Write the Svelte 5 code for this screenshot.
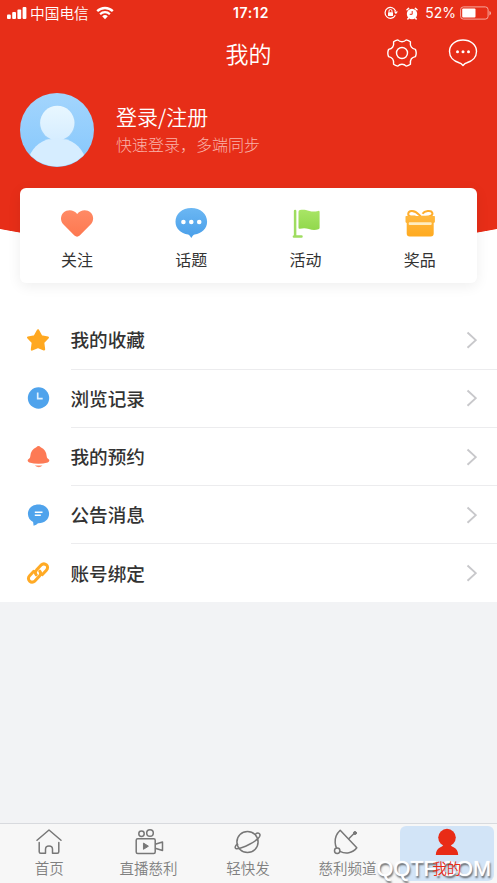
<script lang="ts">
    const shortcuts = [
        { icon: 'heart', label: '关注' },
        { icon: 'topic', label: '话题' },
        { icon: 'flag', label: '活动' },
        { icon: 'gift', label: '奖品' }
    ];

    const menu = [
        { icon: 'star', label: '我的收藏' },
        { icon: 'clock', label: '浏览记录' },
        { icon: 'bell', label: '我的预约' },
        { icon: 'notice', label: '公告消息' },
        { icon: 'link', label: '账号绑定' }
    ];

    const tabs = [
        { icon: 'home', label: '首页' },
        { icon: 'live', label: '直播慈利' },
        { icon: 'planet', label: '轻快发' },
        { icon: 'dish', label: '慈利频道' },
        { icon: 'user', label: '我的' }
    ];

    let active = $state('user');
</script>

<div class="page">
    <header class="hero">
        <div class="status">
            <div class="status-left">
                <svg width="20" height="14" viewBox="0 0 20 14" fill="#fff">
                    <rect x="0" y="8.5" width="3.8" height="4.5" rx="1" />
                    <rect x="5.2" y="6" width="3.8" height="7" rx="1" />
                    <rect x="10.4" y="3.5" width="3.8" height="9.5" rx="1" />
                    <rect x="15.6" y="1" width="3.8" height="12" rx="1" />
                </svg>
                <span class="carrier">中国电信</span>
                <svg width="18" height="14" viewBox="0 0 18 14" fill="none" stroke="#fff">
                    <path d="M1.2 5.2a11.2 11.2 0 0 1 15.6 0" stroke-width="2.4" />
                    <path d="M4.1 8.2a7 7 0 0 1 9.8 0" stroke-width="2.2" />
                    <path d="M6.2 10.3a4 4 0 0 1 5.6 0L9 13.2z" fill="#fff" stroke="none" />
                </svg>
            </div>
            <span class="time">17:12</span>
            <div class="status-right">
                <svg width="14" height="14" viewBox="0 0 14 14" fill="none" stroke="#fff">
                    <path d="M11.6 5.2A5.4 5.4 0 1 0 11.3 9.3" stroke-width="1.2" />
                    <path d="M9.9 5.6h4l-2 2.6z" fill="#fff" stroke="none" />
                    <path d="M5 6.5V5a1.5 1.5 0 0 1 3 0v1.5" />
                    <rect x="4" y="6.2" width="5" height="3.8" rx=".5" fill="#fff" stroke="none" />
                </svg>
                <svg class="alarm" width="12" height="13" viewBox="0 0 12 13">
                    <circle cx="6" cy="7" r="5.2" fill="#fff" />
                    <path d="M1 2.8 2.6 1.4M9.4 1.4 11 2.8M2.4 11.2l-.6.8M9.6 11.2l.6.8" stroke="#fff" stroke-width="1.5" stroke-linecap="round" />
                    <path d="M6.2 4v3.3H3.7" fill="none" stroke="#e72e18" />
                </svg>
                <span class="percent">52%</span>
                <svg width="32" height="14" viewBox="0 0 32 14">
                    <rect x=".6" y=".9" width="27.5" height="12.2" rx="2.8" fill="none" stroke="#f5a99f" stroke-width="1" />
                    <rect x="2.2" y="2.5" width="13.3" height="9" rx="1" fill="#fff" />
                    <path d="M29.4 5v4.4q1.6-.6 1.6-2.2T29.4 5z" fill="#f5a99f" />
                </svg>
            </div>
        </div>

        <div class="titlebar">
            <h1>我的</h1>
            <div class="actions">
                <svg width="30" height="28" viewBox="0 0 30 28" fill="none" stroke="#fff" stroke-width="1.4" stroke-linejoin="round">
                    <path d="M10.8.9C12 2.300 13.400 2.800 15 2.800s3-.5 4.200-1.900q2.400.5 4.200 1.800c-.4 2.800.1 4.300 1 5.500 1 1.300 2.300 1.800 4 2.200q.8 1.800.8 3.600t-.8 3.600c-1.700.4-3 .9-4 2.200-.9 1.200-1.400 2.700-1 5.500q-1.800 1.300-4.200 1.800C18 25.700 16.600 25.200 15 25.200s-3 .5-4.200 1.900q-2.400-.5-4.200-1.800c.4-2.800-.1-4.300-1-5.500-1-1.300-2.300-1.800-4-2.200Q.8 15.800.8 14t.8-3.600c1.700-.4 3-.9 4-2.200.9-1.200 1.400-2.700 1-5.500Q8.400 1.400 10.800.9z" />
                    <circle cx="15" cy="14" r="5.5" />
                </svg>
                <svg width="30" height="28" viewBox="0 0 30 28" fill="none" stroke="#fff" stroke-width="1.4" stroke-linejoin="round">
                    <path d="M15 1C7.300 1 1.500 6 1.500 12.500c0 5.500 4 9.700 9.600 11.200 1.700.4 2.600 1.200 3.900 2.800 1.300-1.600 2.200-2.400 3.900-2.800 5.600-1.500 9.600-5.700 9.600-11.200C28.500 6 22.700 1 15 1z" />
                    <g fill="#fff" stroke="none">
                        <circle cx="9.5" cy="12.7" r="1.5" />
                        <circle cx="15" cy="12.7" r="1.5" />
                        <circle cx="20.5" cy="12.7" r="1.5" />
                    </g>
                </svg>
            </div>
        </div>

        <div class="profile">
            <svg width="74" height="74" viewBox="0 0 74 74">
                <defs>
                    <linearGradient id="av-bg" x1="0" y1="0" x2="0" y2="1">
                        <stop offset="0" stop-color="#a3d5fd" />
                        <stop offset="1" stop-color="#85c7fc" />
                    </linearGradient>
                    <linearGradient id="av-head" x1="0" y1="0" x2="0" y2="1">
                        <stop offset="0" stop-color="#e8f7ff" />
                        <stop offset="1" stop-color="#d6edff" />
                    </linearGradient>
                    <clipPath id="av-clip"><circle cx="37" cy="37" r="36.6" /></clipPath>
                </defs>
                <circle cx="37" cy="37" r="37" fill="url(#av-bg)" />
                <g clip-path="url(#av-clip)">
                    <path d="M9 64c4-10 13-19 28-19s24 9 28 19v12H9z" fill="#d6edff" />
                    <circle cx="37.3" cy="30.5" r="18" fill="#a2d2f8" opacity=".5" />
                    <circle cx="37.3" cy="30" r="17.2" fill="url(#av-head)" />
                    <path d="M25 48q12-5 24 0v6H25z" fill="#d6edff" />
                </g>
            </svg>
            <div class="profile-text">
                <strong>登录/注册</strong>
                <span>快速登录，多端同步</span>
            </div>
        </div>
    </header>

    <section class="shortcuts">
        {#each shortcuts as item}
            <div class="shortcut">
                <svg width="34" height="34" viewBox="0 0 34 34">
                    {#if item.icon === 'heart'}
                        <linearGradient id="g-heart" x1="0" y1="0" x2="0" y2="1">
                            <stop offset="0" stop-color="#ff8a65" /><stop offset="1" stop-color="#fd7850" />
                        </linearGradient>
                        <path d="M17.200 8C13.500 3.300 7.300 3.200 3.600 6.600.100 9.900.200 15.300 3.500 18.600l10.900 11q2.700 2.200 5.300 0l10.900-11c3.400-3.300 3.400-8.700 0-12C26.900 3.200 20.800 3.500 17.200 8z" fill="url(#g-heart)" />
                    {:else if item.icon === 'topic'}
                        <linearGradient id="g-topic" x1="0" y1="0" x2="0" y2="1">
                            <stop offset="0" stop-color="#6bb7f3" /><stop offset="1" stop-color="#4a9fe9" />
                        </linearGradient>
                        <path d="M17.300 2C8 2 1.500 7.800 1.500 15.800c0 6.700 5.300 11.700 12.600 12.800 1.400.4 2 1.600 3.200 3.400 1.200-1.800 1.800-3 3.200-3.400 7.300-1.100 12.600-6.100 12.600-12.800C33.100 7.800 26.600 2 17.300 2z" fill="url(#g-topic)" />
                        <g fill="#fff">
                            <circle cx="9.4" cy="16" r="2.3" />
                            <circle cx="17.3" cy="16" r="2.3" />
                            <circle cx="25.2" cy="16" r="2.3" />
                        </g>
                    {:else if item.icon === 'flag'}
                        <linearGradient id="g-flag" x1="0" y1="0" x2="0" y2="1">
                            <stop offset="0" stop-color="#a9e566" /><stop offset="1" stop-color="#91d84c" />
                        </linearGradient>
                        <path d="M6.1 5v25.6M4.900 30.500h7.600" stroke="#9fdd60" stroke-width="2.5" stroke-linecap="round" fill="none" />
                        <path d="M9.500 5.800q0-1.400 1.500-1.700c3-.6 5-.5 9.500.9 3 .9 5.500.6 8.800-.1q1.300-.2 1.300 1.100v15.700q0 1.100-1.200 1.500c-3 1.100-6 1-9.500-.2-3.400-1.100-5.800-1-9-.3q-1.400.3-1.400-1z" fill="url(#g-flag)" />
                    {:else}
                        <linearGradient id="g-gift" x1="0" y1="0" x2="0" y2="1">
                            <stop offset="0" stop-color="#ffb83e" /><stop offset="1" stop-color="#ffaa20" />
                        </linearGradient>
                        <path d="M12.500 10.500H7.800C4 9.700 4.500 5.200 8.600 4.900c5-.3 6.600 3.200 9.400 5.800h4.600c4.800-.2 7.500-1.600 6.700-3.900-1.100-2.900-7.800-2.200-9.800 1" fill="none" stroke="#ffae2d" stroke-width="2" />
                        <path d="M3.100 10h28.200q.6 0 .6.700v5.100q0 1-1.200 1.200V27.500q0 3-3 3H6.700q-3 0-3-3V17q-1.200-.2-1.200-1.200v-5.100q0-.7.6-.7z" fill="url(#g-gift)" />
                        <rect x="5.7" y="16.2" width="23" height="2.7" rx="1" fill="#ffedc0" />
                    {/if}
                </svg>
                <span>{item.label}</span>
            </div>
        {/each}
    </section>

    <section class="menu">
        {#each menu as item}
            <div class="menu-row">
                <svg class="menu-icon" width="24" height="24" viewBox="0 0 24 24">
                    {#if item.icon === 'star'}
                        <path d="m12 2.300 3.300 6 6.600 1.200-4.700 5 .9 7L12 18.900l-6.100 2.600.9-7-4.700-5 6.600-1.200z" fill="#ffa820" stroke="#ffa820" stroke-width="2.2" stroke-linejoin="round" />
                    {:else if item.icon === 'clock'}
                        <circle cx="12.5" cy="12" r="10.7" fill="#4fa3ec" />
                        <path d="M11.700 6.500v6.200h5" fill="none" stroke="#dff1ff" stroke-width="1.7" />
                    {:else if item.icon === 'bell'}
                        <path d="M10.300 2.300q2.200-2.800 4.400 0c3.700 1.400 5.700 4.600 6 9 .2 1.500.6 2.100 1.900 3 1.200.8.900 2.600-.8 3.100-6.200 1.900-12.400 1.900-18.600 0-1.700-.5-2-2.300-.8-3.100 1.300-.9 1.700-1.500 1.900-3 .3-4.400 2.300-7.600 6-9z" fill="#fd7a55" />
                        <path d="M8.700 20.600h7.800q-3.500 3.400-7.800 0z" fill="#fd8b6b" />
                    {:else if item.icon === 'notice'}
                        <path d="M12.500 1.500c-6.200 0-10.600 4-10.600 9.300 0 3.700 2 6.600 5.200 8.100l.5 3.900q3-.6 4.400-2.500c6.400.2 11.100-3.900 11.100-9.500 0-5.300-4.400-9.300-10.600-9.300z" fill="#4fa3ec" />
                        <path d="M8.800 9.200h7.700M8.800 12.200h6" stroke="#fff" stroke-width="1.4" />
                    {:else}
                        <g fill="none" stroke="#ffaa25" stroke-width="3" stroke-linecap="round">
                            <path d="M10.200 13.800q-1.900-2.400.3-4.700l4.400-4.900c3.900-3.500 9 1.200 5.500 5l-4.200 4.500" />
                            <path d="M13.800 10.200q1.900 2.400-.3 4.700l-4.400 4.900c-3.900 3.500-9-1.200-5.500-5l4.200-4.500" />
                        </g>
                    {/if}
                </svg>
                <div class="menu-body">
                    <span>{item.label}</span>
                    <svg width="11" height="18" viewBox="0 0 11 18" fill="none" stroke="#c8c8cb" stroke-width="1.9">
                        <path d="m1.500 1.500 8.300 7.600-8.300 7.600" />
                    </svg>
                </div>
            </div>
        {/each}
    </section>

    <nav class="tabbar">
        {#each tabs as tab}
            <button class="tab" class:active={tab.icon === active} onclick={() => (active = tab.icon)}>
                <svg width="30" height="28" viewBox="0 0 30 28" fill="none" stroke="#777" stroke-width="1.5" stroke-linejoin="round" stroke-linecap="round">
                    {#if tab.icon === 'home'}
                        <path d="M3 12.200 15 2l12 10.200M5.200 14.500v9.300q0 1.500 1.500 1.500h4.800v-4q0-3.200 3.500-3.200t3.500 3.200v4h4.800q1.500 0 1.500-1.500v-9.300" />
                    {:else if tab.icon === 'live'}
                        <circle cx="7.5" cy="5.8" r="2.7" />
                        <circle cx="16" cy="5" r="3.3" />
                        <rect x="2.2" y="10.8" width="19" height="14.8" rx="1.5" />
                        <path d="m22 16 6.500-2v8.500l-6.500-2" />
                        <path d="m9.800 15.300 4.600 2.900-4.600 2.900z" fill="#777" stroke-width="1" />
                    {:else if tab.icon === 'planet'}
                        <circle cx="14.5" cy="14" r="10.6" />
                        <path d="M4.600 16.300C1.900 17.300 1.300 20.500 3.600 20.800 9.500 20.500 24.500 13 26.600 8.500 28 5.300 25 3.900 22.400 6.300" />
                    {:else if tab.icon === 'dish'}
                        <path d="M8.200 2.300C.5 9.500 2.500 20.500 8 23.300c5.500 2.900 12.500 2.100 16.800-3.500z" />
                        <path d="m16.800 10.800 5.500-5.500" />
                        <circle cx="23" cy="5" r="1.5" fill="#777" stroke-width="1" />
                        <circle cx="5.2" cy="22.8" r="2.7" fill="#f7f7f7" />
                    {:else}
                        <g fill="#e92b16" stroke="none">
                            <circle cx="15" cy="9.6" r="8.8" />
                            <path d="M11.500 16h7c0 1.600 1 2.300 2.600 3.100 3.300 1.500 5 4.100 5.100 7.900H3.800c.1-3.800 1.800-6.400 5.100-7.900 1.600-.8 2.600-1.500 2.600-3.100z" />
                        </g>
                    {/if}
                </svg>
                <span>{tab.label}</span>
            </button>
        {/each}
    </nav>

    <div class="watermark">QQTF.COM</div>
</div>

<style>
    :global(body) {
        margin: 0;
    }

    .page {
        position: relative;
        display: flex;
        flex-direction: column;
        width: 497px;
        height: 883px;
        overflow: hidden;
        background: #f2f3f5;
        font-family: 'Noto Sans CJK SC', sans-serif;
        color: #333;
    }

    svg {
        display: block;
        flex: none;
    }

    .hero {
        flex: none;
        box-sizing: border-box;
        height: 252px;
        background: radial-gradient(ellipse 600px 252px at 50% 0, #e72e18 99.7%, #fff 100%);
        color: #fff;
    }

    .status {
        display: grid;
        grid-template-columns: 1fr auto 1fr;
        align-items: center;
        height: 26px;
        padding: 0 5px 0 7px;
    }

    .status-left,
    .status-right {
        display: flex;
        align-items: center;
    }

    .status-right {
        justify-content: flex-end;
    }

    .carrier {
        margin: 0 7px 0 3px;
        font-size: 14.7px;
        font-weight: 350;
        line-height: 20px;
    }

    .time {
        padding-left: 3px;
        font: 600 14px/20px Inter, sans-serif;
        letter-spacing: 0.7px;
    }

    .alarm {
        margin: 0 7px 0 8px;
    }

    .percent {
        margin-right: 4px;
        font: 400 14px/20px Inter, sans-serif;
    }

    .titlebar {
        display: grid;
        grid-template-columns: 1fr auto 1fr;
        align-items: center;
        height: 54px;
        padding: 0 19px;
    }

    h1 {
        grid-column: 2;
        margin: 0;
        font-size: 23px;
        font-weight: 350;
        line-height: 30px;
    }

    .actions {
        display: flex;
        justify-content: flex-end;
        gap: 31px;
    }

    .profile {
        display: flex;
        gap: 22px;
        padding: 13px 20px 0;
    }

    .profile-text {
        display: flex;
        flex-direction: column;
        padding-top: 9px;
    }

    .profile-text strong {
        font-size: 21px;
        font-weight: 350;
        line-height: 28px;
    }

    .profile-text span {
        font-size: 16px;
        font-weight: 300;
        line-height: 28px;
        color: #f9b3aa;
    }

    .shortcuts {
        z-index: 1;
        display: flex;
        flex: none;
        box-sizing: border-box;
        height: 95px;
        margin: -64px 20px 0;
        padding-top: 18px;
        background: #fff;
        border-radius: 6px;
        box-shadow: 0 3px 14px rgba(0, 0, 0, 0.07);
    }

    .shortcut {
        display: flex;
        flex: 1;
        flex-direction: column;
        align-items: center;
        gap: 7px;
        font-size: 16px;
        line-height: 24px;
    }

    .menu {
        flex: none;
        height: 292.2px;
        margin-top: -31px;
        padding-top: 58.3px;
        background: #fff;
    }

    .menu-row {
        display: flex;
        height: 58.3px;
        padding-left: 26px;
    }

    .menu-icon {
        align-self: center;
        margin-top: 1px;
    }

    .menu-body {
        display: flex;
        flex: 1;
        align-items: center;
        justify-content: space-between;
        margin-left: 20.5px;
        padding-right: 20.5px;
        box-shadow: 0 1px #ececee;
        font-size: 18.6px;
        font-weight: 500;
    }

    .menu-body span {
        margin-top: -1px;
    }

    .menu-body svg {
        margin-top: 1px;
    }

    .menu-row:last-child .menu-body {
        box-shadow: none;
    }

    .tabbar {
        display: flex;
        flex: none;
        box-sizing: border-box;
        height: 60px;
        margin-top: auto;
        border-top: 1px solid #d8dade;
        background: #f7f7f7;
    }

    .tab {
        display: flex;
        flex: 1 1 0;
        flex-direction: column;
        align-items: center;
        gap: 2px;
        min-width: 0;
        margin: 2px 3px 2px 2px;
        padding: 2px 0 0;
        border: 0;
        border-radius: 6px;
        background: none;
        font: 350 14.5px/20px 'Noto Sans CJK SC', sans-serif;
        color: #808080;
        white-space: nowrap;
    }

    .tab span {
        position: relative;
        z-index: 1;
    }

    .tab.active {
        background: #d2e4f7;
        color: #e92b16;
    }

    .watermark {
        position: absolute;
        right: 6px;
        bottom: 1px;
        font: 400 21.7px/26px 'Liberation Sans', sans-serif;
        color: #fff;
        text-shadow: 0 0 1px #fff, 1px 2px 2px #555;
    }
</style>
